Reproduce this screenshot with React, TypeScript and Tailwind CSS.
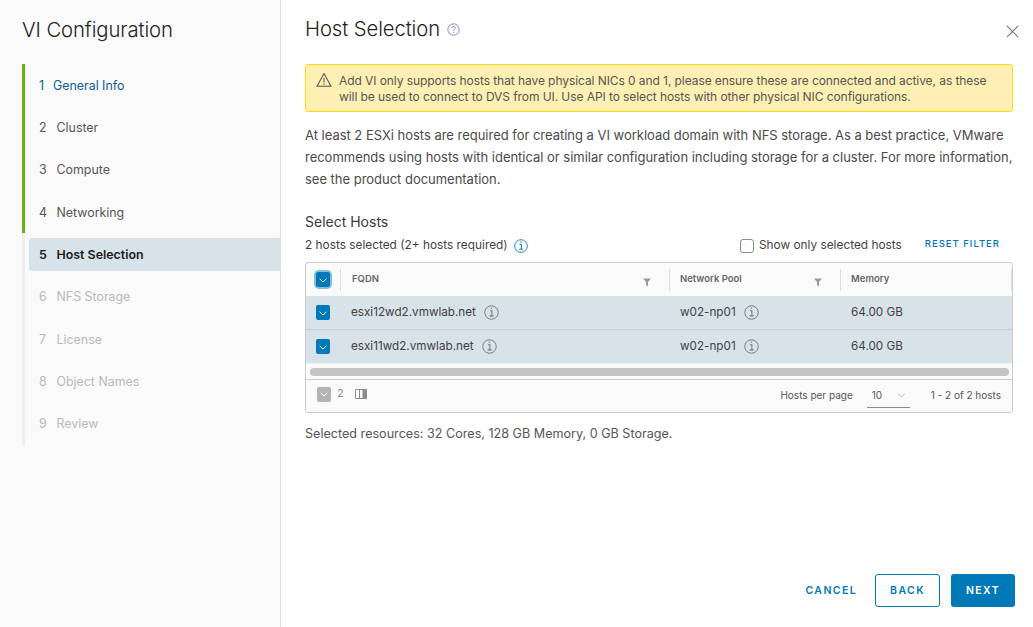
import React from 'react';

const steps = [
  { n: 1, label: 'General Info', state: 'current' },
  { n: 2, label: 'Cluster', state: 'done' },
  { n: 3, label: 'Compute', state: 'done' },
  { n: 4, label: 'Networking', state: 'done' },
  { n: 5, label: 'Host Selection', state: 'active' },
  { n: 6, label: 'NFS Storage', state: 'todo' },
  { n: 7, label: 'License', state: 'todo' },
  { n: 8, label: 'Object Names', state: 'todo' },
  { n: 9, label: 'Review', state: 'todo' },
];

const hosts = [
  { fqdn: 'esxi12wd2.vmwlab.net', pool: 'w02-np01', memory: '64.00 GB', line: 'border-[#cccccc]' },
  { fqdn: 'esxi11wd2.vmwlab.net', pool: 'w02-np01', memory: '64.00 GB', line: 'border-[#f0f0f0]' },
];

const InfoIcon = ({ className }: { className: string }) => (
  <svg viewBox="0 0 16 16" className={className} fill="none" stroke="currentColor">
    <circle cx="8" cy="8" r="7.2" strokeWidth="1" />
    <path d="M6.4 6.2h2v5.2M6 11.6h4.2" strokeWidth="1.1" />
    <path d="M7.2 3.4h1.2" strokeWidth="1.4" />
  </svg>
);

const Check = ({ tone = 'bg-[#0079b8]' }: { tone?: string }) => (
  <span className={`flex h-[15px] w-[14px] items-center justify-center rounded-[2px] ${tone}`}>
    <svg viewBox="0 0 12 12" className="h-[12px] w-[12px]" fill="none" stroke="white" strokeWidth="1">
      <path d="M2.6 4.8 6 8l3.4-3.2" />
    </svg>
  </span>
);

const Filter = () => (
  <svg viewBox="0 0 10 10" className="h-[10px] w-[10px] text-[#9a9a9a]" fill="currentColor">
    <path d="M1 1.5h8L6 5v4.5L4 8V5z" />
  </svg>
);

export default function App() {
  return (
    <div className="flex h-[627px] w-[1033px] overflow-hidden bg-white font-['Inter','Open_Sans',sans-serif] text-[#565656]">
      {/* Wizard steps */}
      <aside className="h-full w-[281px] shrink-0 border-r border-[#dddddd] bg-[#fafafa] pl-[22px]">
        <h2 className="mt-[17px] h-[47px] text-[20.3px] font-light leading-[26px] tracking-[-0.1px] text-[#222222]">VI Configuration</h2>
        <ol>
          {steps.map((s) => (
            <li
              key={s.n}
              className={`h-[42.35px] border-l-[3px] pl-[4px] pt-[5px] ${s.n < 5 ? 'border-[#60b515]' : 'border-[#eeeeee]'}`}
            >
              <div
                className={`flex h-[33px] items-center rounded-l-[3px] pl-[10px] pt-[1px] text-[12.4px] ${
                  s.state === 'active'
                    ? 'bg-[#d8e3e9] font-semibold text-[#1b1b1b]'
                    : s.state === 'current'
                      ? 'text-[#0f5f96]'
                      : s.state === 'done'
                        ? 'text-[#565656]'
                        : 'text-[#b9b9b9]'
                }`}
              >
                <span className={s.n === 1 ? 'w-[14px]' : 'w-[17.5px]'}>{s.n}</span>
                <span>{s.label}</span>
              </div>
            </li>
          ))}
        </ol>
      </aside>

      {/* Main panel */}
      <main className="flex h-full min-w-0 flex-1 flex-col pl-[24px] pr-[20px]">
        <header className="flex h-[47px] items-start pt-[16px]">
          <h1 className="text-[20.3px] font-light leading-[26px] tracking-[-0.1px] text-[#222222]">Host Selection</h1>
          <svg viewBox="0 0 16 16" className="ml-[7px] mt-[7px] h-[13px] w-[13px] text-[#6870c4]" fill="none" stroke="currentColor">
            <circle cx="8" cy="8" r="7" />
            <path d="M6 6.2C6 3.6 10 3.6 10 6.2 10 7.8 8 7.8 8 9.6M8 11v1.2" />
          </svg>
          <svg viewBox="0 0 14 14" className="ml-auto mr-[-6px] mt-[9px] h-[13px] w-[13px] text-[#757575]" fill="none" stroke="currentColor" strokeWidth="1.1">
            <path d="M1 1l12 12M13 1 1 13" />
          </svg>
        </header>

        <div className="mt-[17px] flex h-[48px] w-[708px] items-start rounded-[3px] border border-[#ffdc0b] bg-[#feefb3] pl-[10px] pt-[8px] text-[12px] leading-[16px] text-[#565656]">
          <svg viewBox="0 0 16 16" className="mr-[7px] mt-[-1px] h-[16px] w-[16px] shrink-0 text-[#565656]" fill="none" stroke="currentColor" strokeWidth="1.1">
            <path d="M8 1.6 15 14.2H1z" strokeLinejoin="round" />
            <path d="M8 6v4.4M8 11.6v1.2" />
          </svg>
          <p className="tracking-[-0.075px]">
            Add VI only supports hosts that have physical NICs 0 and 1, please ensure these are connected and active, as these
            <br />
            will be used to connect to DVS from UI. Use API to select hosts with other physical NIC configurations.
          </p>
        </div>

        <p className="mt-[12px] w-[712px] text-[13px] leading-[22px] tracking-[-0.02px] text-[#4a4a4a]">
          At least 2 ESXi hosts are required for creating a VI workload domain with NFS storage. As a best practice, VMware
          <br />
          recommends using hosts with identical or similar configuration including storage for a cluster. For more information,
          <br />
          see the product documentation.
        </p>

        <h3 className="mt-[22px] text-[14px] leading-[20px] text-[#3a3a3a]">Select Hosts</h3>

        <div className="mt-[4px] flex h-[20px] w-[708px] items-center text-[11.85px] text-[#3f3f3f]">
          <span>2 hosts selected (2+ hosts required)</span>
          <InfoIcon className="ml-[6px] h-[14px] w-[14px] text-[#0079b8]" />
          <span className="ml-auto h-[14px] w-[14px] rounded-[3px] border border-[#8c8c8c] bg-white" />
          <span className="ml-[5px]">Show only selected hosts</span>
          <span className="ml-[23px] mr-[13px] mt-[-4px] text-[9.5px] font-medium tracking-[1px] text-[#0079b8]">RESET FILTER</span>
        </div>

        {/* Hosts table */}
        <div className="mt-[6px] w-[708px] overflow-hidden rounded-[3px] border border-[#cccccc] bg-[#fafafa]">
          <div className="flex h-[33px] items-center text-[9.5px] font-semibold text-[#666666]">
            <div className="flex h-full w-[34px] items-center justify-center">
              <span className="rounded-[3px] ring-2 ring-[#7fbfe0]">
                <Check />
              </span>
            </div>
            <div className="relative flex h-[22px] w-[329px] items-center justify-between border-l border-[#dddddd] pl-[11px] pr-[17px]">
              <span className="mb-[1px]">FQDN</span>
              <span className="mt-[5px]"><Filter /></span>
            </div>
            <div className="flex h-[22px] w-[171px] items-center justify-between border-l border-[#dddddd] pl-[10px] pr-[17px]">
              <span className="mb-[1px]">Network Pool</span>
              <span className="mt-[5px]"><Filter /></span>
            </div>
            <div className="flex h-[22px] flex-1 items-center border-x border-[#dddddd] pl-[10px]">
              <span className="mb-[1px]">Memory</span>
            </div>
          </div>

          {hosts.map((h) => (
            <div key={h.fqdn} className={`flex h-[34px] items-center border-b bg-[#d8e3e9] text-[11.7px] text-[#3f3f3f] ${h.line}`}>
              <div className="flex w-[34px] justify-center">
                <Check />
              </div>
              <div className="flex w-[329px] items-center pl-[11px]">
                <span>{h.fqdn}</span>
                <InfoIcon className="ml-[8px] h-[15px] w-[15px] text-[#777777]" />
              </div>
              <div className="flex w-[171px] items-center pl-[11px]">
                <span>{h.pool}</span>
                <InfoIcon className="ml-[8px] h-[15px] w-[15px] text-[#777777]" />
              </div>
              <div className="flex-1 pl-[11px]">{h.memory}</div>
            </div>
          ))}

          <div className="flex h-[16px] items-center border-b border-[#cccccc] bg-[#fafafa] pl-[4px] pr-[3px]">
            <div className="h-[8px] w-full rounded-full bg-[#c4c4c4]" />
          </div>

          <div className="flex h-[32px] items-center bg-[#fafafa] pb-[2px] pl-[11px] pr-[11px] text-[10px] text-[#565656]">
            <div className="mb-[2px] flex items-center">
              <Check tone="bg-[#b3b3b3]" />
              <span className="ml-[6px] mt-[-2px] text-[11px] text-[#8c8c8c]">2</span>
              <svg viewBox="0 0 12 12" className="ml-[11px] h-[12px] w-[12px] text-[#8c8c8c]" fill="none" stroke="currentColor">
                <path d="M.5 1.5h11v9H.5zM4.5 1.5v9" />
                <path d="M7.5 1.5h4v9h-4z" fill="currentColor" stroke="none" />
              </svg>
            </div>
            <span className="ml-auto">Hosts per page</span>
            <div className="ml-[14px] mt-[2px] flex h-[24px] w-[43px] items-center justify-between border-b border-[#8c8c8c] pb-[1px] pl-[5px] pr-[4px]">
              <span>10</span>
              <svg viewBox="0 0 10 6" className="h-[5px] w-[9px] text-[#aaaaaa]" fill="none" stroke="currentColor">
                <path d="M1 .8 5 4.8 9 .8" />
              </svg>
            </div>
            <span className="ml-[21px]">1 - 2 of 2 hosts</span>
          </div>
        </div>

        <p className="mt-[12px] text-[12.6px] leading-[18px] text-[#565656]">
          Selected resources: 32 Cores, 128 GB Memory, 0 GB Storage.
        </p>

        {/* Footer buttons */}
        <div className="mt-auto mb-[20px] mr-[-2px] flex items-center justify-end text-[10.5px] font-semibold tracking-[1.4px]">
          <button className="mr-[18px] text-[#0079b8]">CANCEL</button>
          <button className="mr-[11px] h-[33px] w-[65px] rounded-[3px] border border-[#0079b8] text-[#0079b8]">BACK</button>
          <button className="h-[33px] w-[64px] rounded-[3px] bg-[#0079b8] text-white">NEXT</button>
        </div>
      </main>
    </div>
  );
}
